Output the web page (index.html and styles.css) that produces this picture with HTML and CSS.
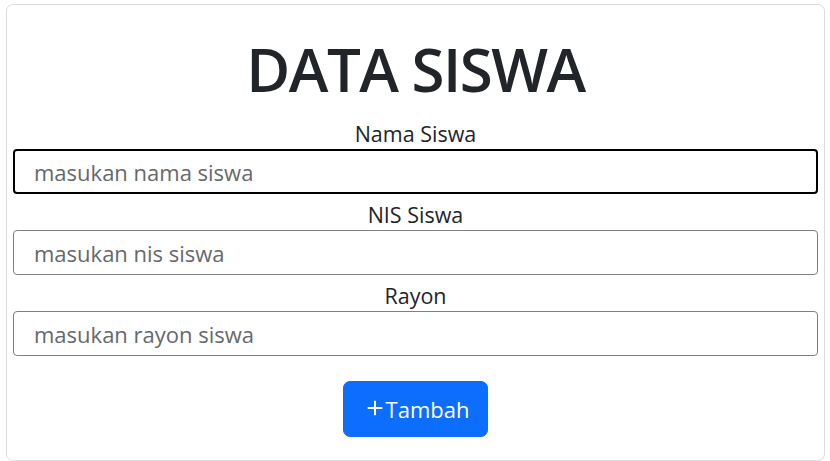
FILE: index.html
```html
<!DOCTYPE html>
<html lang="id">
<head>
<meta charset="utf-8">
<title>Data Siswa</title>
<link rel="stylesheet" href="styles.css">
</head>
<body>
<div class="card">
  <h1 class="title">DATA SISWA</h1>
  <form class="form">
    <label class="label" for="nama">Nama Siswa</label>
    <input class="input focused" id="nama" type="text" placeholder="masukan nama siswa">
    <label class="label" for="nis">NIS Siswa</label>
    <input class="input" id="nis" type="text" placeholder="masukan nis siswa">
    <label class="label" for="rayon">Rayon</label>
    <input class="input" id="rayon" type="text" placeholder="masukan rayon siswa">
    <div class="actions">
      <button class="btn" type="button"><svg class="plus" viewBox="0 0 16 16" width="18" height="18"><path d="M8 1.5v13M1.5 8h13" stroke="currentColor" stroke-width="1.8" fill="none"/></svg><span>Tambah</span></button>
    </div>
  </form>
</div>
</body>
</html>
```

FILE: styles.css
```css
* { box-sizing: border-box; }
html, body { margin: 0; padding: 0; background: #fff; }
body {
  padding: 4px 5px 0 6px;
  font-family: "Open Sans", "Noto Sans", sans-serif;
  color: #212529;
}
.card {
  border: 1px solid #dcdcdc;
  border-radius: 7px;
  height: 457px;
  padding: 0 6px;
}
.title {
  margin: 28px 0 0;
  text-align: center;
  font-size: 60px;
  font-weight: 600;
  line-height: 72px;
  letter-spacing: -1.5px;
}
.form { display: flex; flex-direction: column; margin-top: 14px; }
.label {
  text-align: center;
  font-size: 21.5px;
  line-height: 30px;
  margin-top: 6px;
}
.label:first-child { margin-top: 0; }
.input {
  display: block;
  width: 100%;
  height: 45px;
  border: 1px solid #808080;
  border-radius: 4px;
  padding: 0 20px;
  font-family: inherit;
  font-size: 22px;
  color: #212529;
  outline: none;
}
.input::placeholder { color: #65696e; }
.input.focused { border: 2px solid #000; padding: 0 19px; }
.actions { display: flex; justify-content: center; margin-top: 25px; }
.btn {
  display: flex;
  align-items: center;
  gap: 2px;
  height: 56px;
  padding: 0 18px 0 22px;
  background: #0d6efd;
  color: #fff;
  border: 1px solid #0d6efd;
  border-radius: 7px;
  font-family: inherit;
  font-size: 22px;
}
.plus { display: block; margin-top: -3px; }
```
